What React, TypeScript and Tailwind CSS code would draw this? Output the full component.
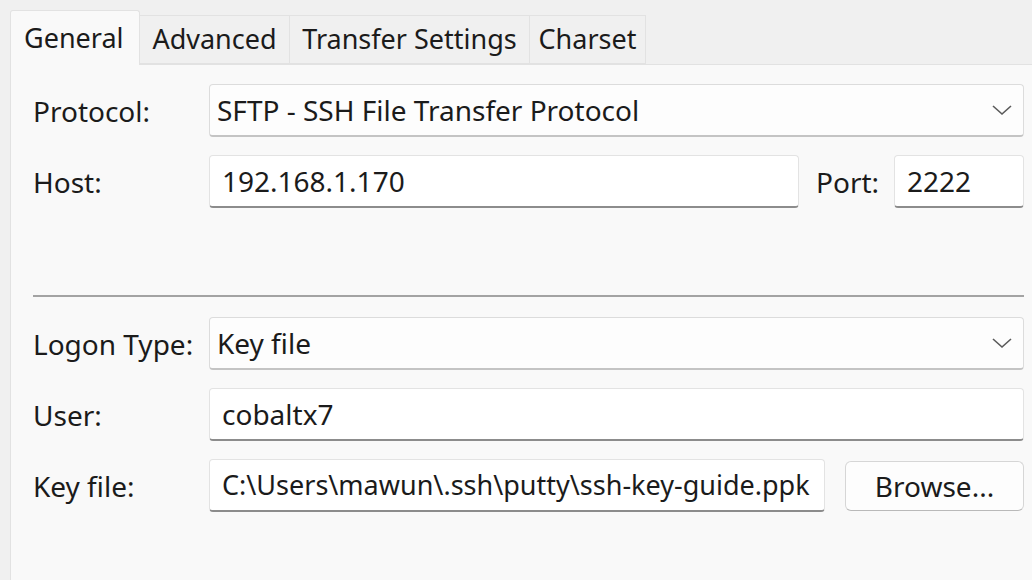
const font = { fontFamily: '"Noto Sans", "Open Sans", sans-serif' };

function Chevron() {
  return (
    <svg width="22" height="14" viewBox="0 0 22 14" className="shrink-0">
      <path d="M2 3 L11 11 L20 3" fill="none" stroke="#5a5a5a" strokeWidth="1.6" />
    </svg>
  );
}

function Field({ value, className = "" }: { value: string; className?: string }) {
  return (
    <div
      className={
        "h-[53px] flex items-center px-[12px] bg-white border border-[#e3e3e3] border-b-2 border-b-[#8c8c8c] rounded-[4px] text-[28px] text-[#1b1b1b] whitespace-nowrap overflow-hidden " +
        className
      }
    >
      {value}
    </div>
  );
}

function Select({ value }: { value: string }) {
  return (
    <div className="flex-1 h-[53px] flex items-center justify-between pl-[7px] pr-[10px] bg-[#fdfdfd] border border-[#dcdcdc] border-b-2 border-b-[#c4c4c4] rounded-[4px] text-[28px] text-[#1b1b1b]">
      <span>{value}</span>
      <Chevron />
    </div>
  );
}

function Label({ text }: { text: string }) {
  return <div className="w-[176px] shrink-0 text-[28px] text-[#1b1b1b]">{text}</div>;
}

function Tab({ text, className = "" }: { text: string; className?: string }) {
  return (
    <div
      className={
        "h-[49px] bg-[#f0f0f0] border border-l-0 border-[#e2e2e2] text-[27px] text-[#1b1b1b] flex items-center justify-center " +
        className
      }
    >
      {text}
    </div>
  );
}

export default function App() {
  return (
    <div className="w-[1032px] h-[580px] bg-[#f0f0f0] overflow-hidden flex flex-col" style={font}>
      <div className="flex items-end pl-[10px] pt-[9px]">
        <div className="h-[55px] w-[130px] bg-[#f9f9f9] border border-b-0 border-[#e2e2e2] rounded-t-[3px] pl-[13px] pt-[7px] text-[27px] text-[#1b1b1b] relative top-[1px]">
          General
        </div>
        <Tab text="Advanced" className="w-[150px]" />
        <Tab text="Transfer Settings" className="w-[240px]" />
        <Tab text="Charset" className="w-[116px]" />
      </div>
      <div className="flex-1 ml-[10px] bg-[#f9f9f9] border-l border-t border-[#e2e2e2] pl-[22px] pr-[8px] pt-[19px] flex flex-col">
        <div className="flex items-center">
          <Label text="Protocol:" />
          <Select value="SFTP - SSH File Transfer Protocol" />
        </div>
        <div className="flex items-center mt-[18px]">
          <Label text="Host:" />
          <Field value="192.168.1.170" className="w-[590px]" />
          <div className="text-[28px] text-[#1b1b1b] ml-[17px] mr-[15px]">Port:</div>
          <Field value="2222" className="flex-1" />
        </div>
        <div className="mt-[87px] h-[2px] bg-[#a3a3a3]" />
        <div className="flex items-center mt-[20px]">
          <Label text="Logon Type:" />
          <Select value="Key file" />
        </div>
        <div className="flex items-center mt-[18px]">
          <Label text="User:" />
          <Field value="cobaltx7" className="flex-1" />
        </div>
        <div className="flex items-center mt-[18px]">
          <Label text="Key file:" />
          <Field value={"C:\\Users\\mawun\\.ssh\\putty\\ssh-key-guide.ppk"} className="w-[616px] !text-[27px]" />
          <button className="ml-[20px] flex-1 h-[50px] bg-[#fdfdfd] border border-[#d6d6d6] border-b-[#b9b9b9] rounded-[6px] text-[28px] text-[#1b1b1b]">
            Browse...
          </button>
        </div>
      </div>
    </div>
  );
}
